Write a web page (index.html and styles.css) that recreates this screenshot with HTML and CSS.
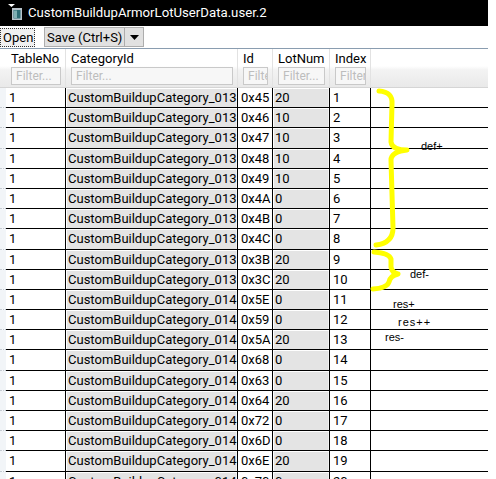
FILE: index.html
```html
<!DOCTYPE html>
<html lang="en">
<head>
  <meta charset="UTF-8">
  <title>CustomBuildupArmorLotUserData.user.2</title>
  <link rel="stylesheet" href="styles.css">
</head>
<body>
  <div class="window">
    <div class="titlebar">
      <svg class="app-icon" width="16" height="17" viewBox="0 0 16 17">
        <rect x="6" y="4" width="10" height="12" fill="#b9c4cc"/>
        <rect x="7.5" y="6" width="7" height="8.5" fill="#2f6f78"/>
        <rect x="8" y="6.5" width="3" height="7.5" fill="#7fb0b4"/>
        <path d="M2 0 H9 L5.5 3 Z" fill="#fff"/>
      </svg>
      <span class="title">CustomBuildupArmorLotUserData.user.2</span>
    </div>

    <div class="toolbar">
      <button class="btn-open">Open</button>
      <div class="split">
        <button class="btn-save">Save (Ctrl+S)</button>
        <button class="btn-drop">
          <svg width="9" height="5" viewBox="0 0 9 5"><path d="M0 0 H9 L4.5 5 Z" fill="#000"/></svg>
        </button>
      </div>
    </div>

    <div class="grid">
      <div class="head">
        <div class="hcell corner"></div>
        <div class="hcell"><span class="label">TableNo</span><span class="filter">Filter...</span></div>
        <div class="hcell"><span class="label">CategoryId</span><span class="filter">Filter...</span></div>
        <div class="hcell"><span class="label">Id</span><span class="filter">Filter...</span></div>
        <div class="hcell"><span class="label">LotNum</span><span class="filter">Filter...</span></div>
        <div class="hcell"><span class="label">Index</span><span class="filter">Filter...</span></div>
        <div class="hcell last"></div>
      </div>
      <div class="rows" id="rows"></div>

      <!-- hand-drawn braces, coordinates are page pixels -->
      <svg class="marks" width="488" height="431" viewBox="0 48 488 431">
        <path d="M379 91 Q393 92 392 104 L391 142 Q392 150 407 150 Q391 152 391 160 L393 228 Q393 243 376 245" />
        <path d="M374 252 Q389 253 391 259 L391 267 Q392 273 398 274 Q390 276 389 282 Q387 288 373 289" />
      </svg>
      <span class="note note-defp">def+</span>
      <span class="note note-defm">def-</span>
      <span class="note note-resp">res+</span>
      <span class="note note-respp">res++</span>
      <span class="note note-resm">res-</span>
    </div>
  </div>

  <script>
    var data = [
      ['013', '0x45', 20], ['013', '0x46', 10], ['013', '0x47', 10], ['013', '0x48', 10],
      ['013', '0x49', 10], ['013', '0x4A', 0], ['013', '0x4B', 0], ['013', '0x4C', 0],
      ['013', '0x3B', 20], ['013', '0x3C', 20], ['014', '0x5E', 0], ['014', '0x59', 0],
      ['014', '0x5A', 20], ['014', '0x68', 0], ['014', '0x63', 0], ['014', '0x64', 20],
      ['014', '0x72', 0], ['014', '0x6D', 0], ['014', '0x6E', 20], ['014', '0x70', 0]
    ];
    var rows = document.getElementById('rows');
    data.forEach(function (d, i) {
      var row = document.createElement('div');
      row.className = 'row';
      row.innerHTML =
        '<div class="cell rh"></div>' +
        '<div class="cell">1</div>' +
        '<div class="cell ro">CustomBuildupCategory_' + d[0] + '</div>' +
        '<div class="cell">' + d[1] + '</div>' +
        '<div class="cell ro">' + d[2] + '</div>' +
        '<div class="cell">' + (i + 1) + '</div>' +
        '<div class="cell fill"></div>';
      rows.appendChild(row);
    });
  </script>
</body>
</html>
```

FILE: styles.css
```css
body {
  margin: 0;
  background: #fff;
  font-family: Roboto, 'Noto Sans', sans-serif;
  overflow: hidden;
}
.window {
  position: relative;
  width: 488px;
  height: 479px;
  overflow: hidden;
  background: #fff;
}
.titlebar {
  display: flex;
  align-items: center;
  height: 26px;
  background: #000;
  color: #fff;
}
.app-icon {
  margin: 0 6px 2px 6px;
}
.title {
  font-size: 13.2px;
  line-height: 18px;
}
.toolbar {
  display: flex;
  align-items: center;
  gap: 9px;
  height: 22px;
  background: #fff;
}
.toolbar button {
  font-family: inherit;
  font-size: 13px;
  color: #000;
  padding: 0 2px;
  height: 19px;
  line-height: 17px;
  white-space: nowrap;
}
.btn-open {
  background: #f0f0f0;
  border: 1px dotted #333;
  width: 35px;
}
.split {
  display: flex;
  border: 1px solid #adadad;
  background: #e1e1e1;
}
.split button {
  height: 18px;
  background: #e1e1e1;
  border: none;
}
.btn-save {
  width: 80px;
  border-right: 1px solid #adadad !important;
}
.btn-drop {
  width: 18px;
  display: flex;
  align-items: center;
  justify-content: center;
}
.grid {
  position: relative;
}
.head, .row {
  display: grid;
  grid-template-columns: 6px 60px 172px 35px 57px 41px 117px;
}
.head {
  height: 40px;
  box-sizing: border-box;
  border-top: 1px solid #8a9db0;
  border-bottom: 1px solid #d5d5d5;
  background: linear-gradient(#fff 0, #fff 45%, #f3f3f3 55%, #e9e9e9 100%);
}
.hcell {
  display: flex;
  flex-direction: column;
  padding: 1px 4px 0 5px;
  border-right: 1px solid #e2e2e2;
  font-size: 13px;
  overflow: hidden;
  min-width: 0;
}
.hcell.corner {
  padding: 0;
  border-right: none;
}
.hcell.last {
  border-right: none;
}
.label {
  height: 17px;
  line-height: 17px;
  white-space: nowrap;
}
.filter {
  box-sizing: border-box;
  height: 18px;
  border: 1px solid #c9c9c9;
  background: #f7f7f7;
  color: #bdbdbd;
  font-size: 12px;
  line-height: 16px;
  padding-left: 4px;
  white-space: nowrap;
  overflow: hidden;
}
.row {
  height: 20.2px;
}
.cell {
  box-sizing: border-box;
  border-right: 1px solid #000;
  border-bottom: 1px solid #000;
  padding-left: 3px;
  font-size: 13px;
  line-height: 19px;
  white-space: nowrap;
  overflow: hidden;
}
.cell.rh {
  background: #f2f5f8;
  border-right: none;
  border-bottom: 1px dotted #c5cbd2;
}
.cell.fill {
  border-right: none;
}
.cell.ro {
  padding-left: 2px;
  background: #e4e4e4;
  box-shadow: inset 1px 1px 0 #fff, inset -1px 0 0 #f2f2f2;
}
.marks {
  position: absolute;
  left: 0;
  top: 0;
  fill: none;
  stroke: #ffff00;
  stroke-width: 5;
  stroke-linecap: round;
  stroke-linejoin: round;
}
.note {
  position: absolute;
  font-family: 'Liberation Sans', Arial, sans-serif;
  font-size: 11px;
  line-height: 12px;
  color: #000;
}
.note-defp { left: 421px; top: 92px; }
.note-defm { left: 410px; top: 220px; }
.note-resp { left: 393px; top: 250px; }
.note-respp { left: 398px; top: 268px; letter-spacing: 1px; }
.note-resm { left: 385px; top: 283px; }
```
